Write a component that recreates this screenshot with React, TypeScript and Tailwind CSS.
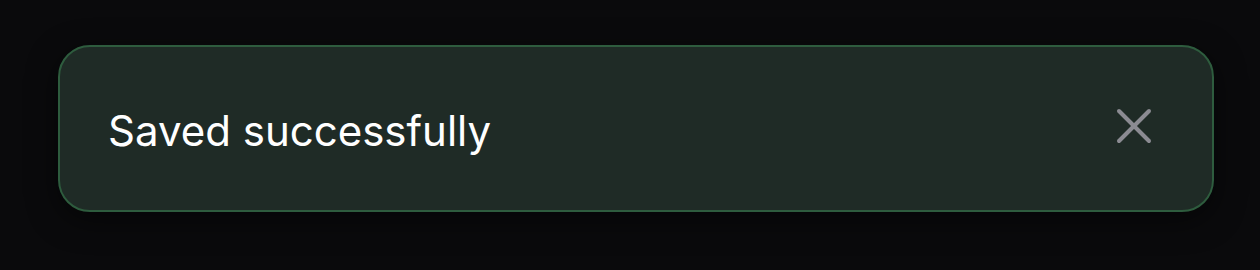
import React from "react";

const App: React.FC = () => {
  return (
    <div className="w-[1260px] h-[270px] bg-[#0a0a0c] pt-[45px] px-[46px]" style={{ fontFamily: "Inter, 'Noto Sans', sans-serif" }}>
      <div className="ml-[12px] w-[1156px] h-[167px] rounded-[32px] border-2 border-[#2e5c3e] bg-[#1f2b26] shadow-[0_8px_30px_rgba(0,0,0,0.5)] flex items-center justify-between pl-[48px] pr-[48px]">
        <span className="text-[42px] text-white leading-none mt-[4px]">Saved successfully</span>
        <button className="w-[60px] h-[60px] -mt-[5px] flex items-center justify-center text-[#8b8b92]">
          <svg width="60" height="60" viewBox="0 0 24 24" fill="none" stroke="currentColor" strokeWidth="1.6" strokeLinecap="round">
            <path d="M18 6 6 18" />
            <path d="m6 6 12 12" />
          </svg>
        </button>
      </div>
    </div>
  );
};

export default App;
